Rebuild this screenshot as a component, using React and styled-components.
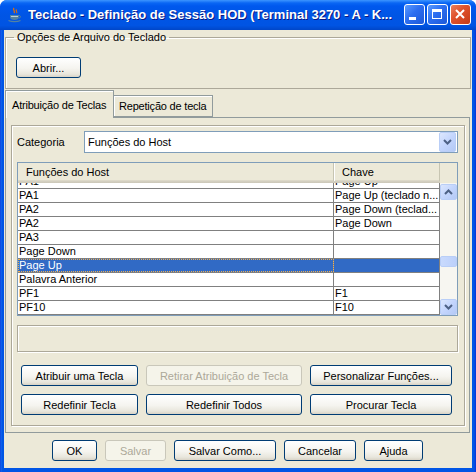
import React, { useLayoutEffect, useRef } from "react";
import styled, { createGlobalStyle } from "styled-components";

const GlobalStyle = createGlobalStyle`
  html, body { margin:0; padding:0; background:#fff; }
  body { font-family:"Liberation Sans", Arial, sans-serif; font-size:11px; color:#000; }
  * { box-sizing:border-box; }
`;

const rows = [
  ["PA1", "Page Up"],
  ["PA1", "Page Up (teclado n..."],
  ["PA2", "Page Down (teclad..."],
  ["PA2", "Page Down"],
  ["PA3", ""],
  ["Page Down", ""],
  ["Page Up", "", true],
  ["Palavra Anterior", ""],
  ["PF1", "F1"],
  ["PF10", "F10"],
];

function JavaIcon() {
  return (
    <svg width="16" height="16" viewBox="0 0 16 16">
      <path d="M7 1c-2 2 2 3 0 5" stroke="#E76F00" strokeWidth="1.3" fill="none" />
      <path d="M9.5 2.5c-1.5 1.5 1.5 2 0 3.5" stroke="#E76F00" strokeWidth="1.1" fill="none" />
      <path d="M3 8h9v2c0 2-2 3-4.5 3S3 12 3 10z" fill="#5382A1" />
      <path d="M12 8.5c2 0 2 2.5 0 2.5" stroke="#5382A1" strokeWidth="1" fill="none" />
      <path d="M1.5 13.5c3 1.5 9 1.5 12 0" stroke="#5382A1" strokeWidth="1.2" fill="none" />
      <rect x="4" y="9" width="7" height="1" fill="#fff" opacity="0.6" />
    </svg>
  );
}

function Chevron({ up }) {
  return (
    <svg width="9" height="6" viewBox="0 0 9 6">
      <path d={up ? "M1 5L4.5 1.5L8 5" : "M1 1L4.5 4.5L8 1"} stroke="#4D6185" strokeWidth="2" fill="none" />
    </svg>
  );
}

export default function App() {
  const viewRef = useRef(null);
  useLayoutEffect(() => {
    if (viewRef.current) viewRef.current.scrollTop = 9;
  }, []);

  return (
    <>
      <GlobalStyle />
      <Window>
        <TitleBar>
          <JavaIcon />
          <Title>Teclado - Definição de Sessão HOD (Terminal 3270 - A - K...</Title>
          <CaptionButton>
            <svg width="21" height="21" viewBox="0 0 21 21"><rect x="5" y="13" width="7" height="3" fill="#fff" /></svg>
          </CaptionButton>
          <CaptionButton>
            <svg width="21" height="21" viewBox="0 0 21 21"><rect x="5.5" y="5.5" width="9" height="9" stroke="#fff" fill="none" /><rect x="5" y="5" width="10" height="3" fill="#fff" /></svg>
          </CaptionButton>
          <CaptionButton $close>
            <svg width="21" height="21" viewBox="0 0 21 21"><path d="M6 6L14 14M14 6L6 14" stroke="#fff" strokeWidth="2" /></svg>
          </CaptionButton>
        </TitleBar>
        <Body>
          <GroupBox>
            <Legend>Opções de Arquivo do Teclado</Legend>
            <Button $w={65}>Abrir...</Button>
          </GroupBox>
          <TabRow>
            <Tab $active $w={109}>Atribuição de Teclas</Tab>
            <Tab $w={99}>Repetição de tecla</Tab>
          </TabRow>
          <TabPanel>
            <Etched>
              <CategoryRow>
                <Label>Categoria</Label>
                <Combo>
                  <ComboText>Funções do Host</ComboText>
                  <ArrowButton $h={20}><Chevron /></ArrowButton>
                </Combo>
              </CategoryRow>
              <ScrollPane>
                <Header>
                  <HeadCell $w={316}>Funções do Host</HeadCell>
                  <HeadCell $w={106}>Chave</HeadCell>
                </Header>
                <Corner />
                <Viewport ref={viewRef}>
                  {rows.map(([a, b, sel], i) => (
                    <Row key={i} $sel={sel}>
                      <Cell $w={316} $focus={sel}>{a}</Cell>
                      <Cell $w={106}>{b}</Cell>
                    </Row>
                  ))}
                </Viewport>
                <ScrollBar>
                  <ArrowButton $h={16}><Chevron up /></ArrowButton>
                  <Track>
                    <Thumb />
                  </Track>
                  <ArrowButton $h={16}><Chevron /></ArrowButton>
                </ScrollBar>
              </ScrollPane>
              <MessageBox />
              <ButtonGrid>
                <Button $w={117}>Atribuir uma Tecla</Button>
                <Button $w={156} disabled>Retirar Atribuição de Tecla</Button>
                <Button $w={142}>Personalizar Funções...</Button>
                <Button $w={117}>Redefinir Tecla</Button>
                <Button $w={156}>Redefinir Todos</Button>
                <Button $w={142}>Procurar Tecla</Button>
              </ButtonGrid>
            </Etched>
          </TabPanel>
          <Footer>
            <Button $w={45}>OK</Button>
            <Button $w={61} disabled>Salvar</Button>
            <Button $w={102}>Salvar Como...</Button>
            <Button $w={72}>Cancelar</Button>
            <Button $w={59}>Ajuda</Button>
          </Footer>
        </Body>
      </Window>
    </>
  );
}

const Window = styled.div`
  width:476px;
  height:472px;
  display:flex;
  flex-direction:column;
  background:linear-gradient(to right,#0831D9 0,#166AEE 1px,#0055E5 2px,#0055E5 calc(100% - 2px),#0831D9 100%);
  border-radius:7px 7px 0 0;
  overflow:hidden;
`;

const TitleBar = styled.div`
  height:30px;
  flex:none;
  display:flex;
  align-items:center;
  padding:0 5px 1px 7px;
  background:linear-gradient(#3D95FF 0,#0A66F4 3px,#0058EE 6px,#0055E5 50%,#0054E3 85%,#0046C8 100%);
`;

const Title = styled.div`
  flex:1;
  margin-left:5px;
  font:bold 13px "Liberation Sans", Arial, sans-serif;
  color:#fff;
  text-shadow:1px 1px 0 #0A1883;
  white-space:nowrap;
  overflow:hidden;
`;

const CaptionButton = styled.div`
  width:21px;
  height:21px;
  margin-left:2px;
  border:1px solid #fff;
  border-radius:3px;
  display:flex;
  align-items:center;
  justify-content:center;
  background:${p => p.$close
    ? "linear-gradient(135deg,#E9805F 0%,#E0532E 40%,#C53B17 100%)"
    : "linear-gradient(135deg,#5A9BFF 0%,#2D6EF0 45%,#1D58D8 100%)"};
  svg { margin:-1px; }
`;

const Body = styled.div`
  flex:1;
  margin:0 4px 4px 4px;
  background:#ECE9D8;
  display:flex;
  flex-direction:column;
  padding-top:1px;
`;

const GroupBox = styled.fieldset`
  margin:0 1px;
  padding:13px 0 8px 10px;
  height:58px;
  border:1px solid #ACA899;
  box-shadow:inset 1px 1px 0 #fff;
  border-radius:0;
  min-width:0;
`;

const Legend = styled.legend`
  margin-left:-2px;
  padding:0 3px;
  line-height:13px;
`;

const TabRow = styled.div`
  height:28px;
  margin-left:1px;
  display:flex;
  align-items:flex-end;
`;

const Tab = styled.div`
  width:${p => p.$w}px;
  height:${p => (p.$active ? 28 : 22)}px;
  padding:0 0 0 ${p => (p.$active ? 6 : 5)}px;
  margin-bottom:${p => (p.$active ? -1 : 0)}px;
  display:flex;
  align-items:center;
  white-space:nowrap;
  letter-spacing:-0.2px;
  background:#ECE9D8;
  border:1px solid #919B9C;
  border-bottom:${p => (p.$active ? "none" : "1px solid #919B9C")};
  ${p => (p.$active ? "" : "border-left:none;")}
  box-shadow:inset 1px 1px 0 #fff;
  position:relative;
  z-index:${p => (p.$active ? 1 : 0)};
`;

const TabPanel = styled.div`
  margin:0 2px 0 1px;
  border:1px solid #919B9C;
  padding:7px 4px 6px 5px;
`;

const Etched = styled.div`
  border:1px solid #ACA899;
  box-shadow:inset 1px 1px 0 #fff, 1px 1px 0 #fff;
  padding:5px 6px 10px 5px;
  display:flex;
  flex-direction:column;
`;

const CategoryRow = styled.div`
  display:flex;
  align-items:center;
  height:22px;
`;

const Label = styled.div`
  width:67px;
`;

const Combo = styled.div`
  width:374px;
  height:22px;
  border:1px solid #7F9DB9;
  background:#fff;
  display:flex;
  align-items:center;
  padding:0 1px 0 3px;
`;

const ComboText = styled.div`
  flex:1;
`;

const ArrowButton = styled.div`
  width:17px;
  height:${p => p.$h}px;
  flex:none;
  border:1px solid #B9CEF7;
  border-radius:2px;
  background:linear-gradient(135deg,#DCE7FE 0%,#C3D5FD 50%,#B4C9F5 100%);
  display:flex;
  align-items:center;
  justify-content:center;
`;

const ScrollPane = styled.div`
  margin-top:9px;
  width:441px;
  height:154px;
  border:1px solid #7F9DB9;
  display:grid;
  grid-template-columns:422px 17px;
  grid-template-rows:20px 132px;
  background:#fff;
`;

const Header = styled.div`
  display:flex;
  align-items:flex-start;
  background:linear-gradient(#ECE9D8 0,#ECE9D8 17px,#E2DECD 17px,#D6D2C2 18px,#CBC7B8 20px);
`;

const HeadCell = styled.div`
  width:${p => p.$w}px;
  height:18px;
  padding-left:8px;
  line-height:18px;
  border-right:1px solid #C7C5B2;
  box-shadow:1px 0 0 #fff;
`;

const Corner = styled.div`
  background:#ECE9D8;
`;

const Viewport = styled.div`
  overflow:hidden;
  background:#fff;
`;

const Row = styled.div`
  display:flex;
  height:14px;
  border-bottom:1px solid #808080;
  background:${p => (p.$sel ? "#316AC5" : "#fff")};
  color:${p => (p.$sel ? "#fff" : "#000")};
`;

const Cell = styled.div`
  width:${p => p.$w}px;
  padding-left:1px;
  line-height:13px;
  border-right:1px solid #808080;
  white-space:nowrap;
  overflow:hidden;
  ${p => (p.$focus ? "outline:1px dotted #F0B050; outline-offset:-1px;" : "")}
`;

const ScrollBar = styled.div`
  display:flex;
  flex-direction:column;
  background:#F7F6F1;
  padding:1px 0 0 0;
`;

const Track = styled.div`
  flex:1;
  position:relative;
`;

const Thumb = styled.div`
  position:absolute;
  left:0;
  right:0;
  top:56px;
  height:11px;
  border:1px solid #B9CEF7;
  border-radius:2px;
  background:linear-gradient(to right,#C9DAFD,#BCD0FB);
`;

const MessageBox = styled.div`
  margin-top:9px;
  width:441px;
  height:27px;
  border:1px solid #ACA899;
  box-shadow:inset 1px 1px 0 #fff, 1px 1px 0 #fff;
`;

const ButtonGrid = styled.div`
  margin:13px 0 0 4px;
  display:grid;
  grid-template-columns:117px 156px 142px;
  column-gap:8px;
  row-gap:8px;
`;

const Button = styled.button`
  width:${p => p.$w}px;
  height:21px;
  padding:0;
  font:11px "Liberation Sans", Arial, sans-serif;
  color:#000;
  border:1px solid #003C74;
  border-radius:3px;
  background:linear-gradient(#FFFFFF 0%,#F5F4EF 55%,#E8E6DC 85%,#D8D3C6 100%);
  &:disabled {
    border-color:#C9C7BA;
    color:#ACA899;
    background:#F5F4EA;
  }
`;

const Footer = styled.div`
  margin-top:7px;
  display:flex;
  justify-content:center;
  gap:8px;
  padding-right:1px;
`;
